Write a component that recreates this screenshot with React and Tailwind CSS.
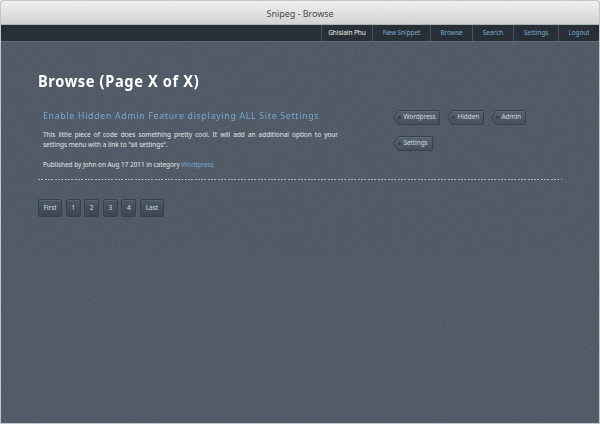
const NAV = [
  { label: 'New Snippet', box: 'w-[58px]', text: 'tracking-[-0.08px]' },
  { label: 'Browse', box: 'w-[42px]', text: 'tracking-[-0.05px]' },
  { label: 'Search', box: 'w-[41px]', text: 'tracking-[0px]' },
  { label: 'Settings', box: 'w-[45px]', text: 'tracking-[-0.05px]' },
  { label: 'Logout', box: 'w-[41px]', text: 'tracking-[-0.1px]' },
];

const PAGES = [
  { label: 'First', box: 'w-6' },
  { label: '1', box: 'w-[15px]' },
  { label: '2', box: 'w-[15px]' },
  { label: '3', box: 'w-[15px]' },
  { label: '4', box: 'w-[15px]' },
  { label: 'Last', box: 'w-6' },
];

function Grain({ id, opacity }) {
  return (
    <svg className={`pointer-events-none absolute inset-0 h-full w-full ${opacity}`} aria-hidden="true">
      <filter id={id}>
        <feTurbulence type="fractalNoise" baseFrequency="0.35" numOctaves="2" />
        <feColorMatrix type="saturate" values="0" />
      </filter>
      <rect width="100%" height="100%" filter={`url(#${id})`} />
    </svg>
  );
}

function Tag({ label, width }) {
  const id = `tag-${label}`;
  return (
    <div className="relative h-[15px]" style={{ width }}>
      <svg className="absolute inset-0 overflow-visible" width={width} height="16" aria-hidden="true">
        <defs>
          <linearGradient id={id} x1="0" y1="0" x2="0" y2="1">
            <stop offset="0" stopColor="#586371" />
            <stop offset="1" stopColor="#46505d" />
          </linearGradient>
        </defs>
        <path d={`M5 .5H${width - 1.5}Q${width - 0.5} .5 ${width - 0.5} 1.5V13.5Q${width - 0.5} 14.5 ${width - 1.5} 14.5H5L.5 7.5Z`} fill={`url(#${id})`} stroke="#37414c" />
        <path d={`M5.5 1.5H${width - 2}`} stroke="#657180" strokeOpacity=".6" />
        <circle cx="6.5" cy="7.5" r="1.3" fill="#3d4753" stroke="#343e49" strokeWidth=".7" />
      </svg>
      <span className="absolute left-[10.5px] top-0 whitespace-nowrap text-[6.5px] leading-[14.5px] tracking-[-0.08px] text-[#d2d6db]">{label}</span>
    </div>
  );
}

export default function App() {
  return (
    <div className="flex h-[424px] w-[600px] flex-col overflow-hidden rounded-t-[3px] border border-[#c3c5c7] bg-[#4f5965] font-['Noto_Sans','Open_Sans',sans-serif] text-[6.5px] text-[#e2e5e8]">
      <header className="relative h-6 shrink-0 border-b border-[#aeb5b6] bg-linear-to-b from-[#f2f2f2] to-[#d3d3d3] text-center">
        <Grain id="header-grain" opacity="opacity-[0.05]" />
        <h1 className="relative text-[9px] leading-[25px] tracking-[-0.05px] text-[#4b4b4b]">Snipeg - Browse</h1>
      </header>
      <nav className="flex h-[17px] shrink-0 justify-end border-b border-[#626b75] bg-[#292f36] leading-4">
        <div className="w-[51px] border-l border-[#48515c] text-center text-[#f0f1f2]">
          <span className="tracking-[-0.05px]">Ghislain Phu</span>
        </div>
        {NAV.map((n) => (
          <a key={n.label} className={`${n.box} whitespace-nowrap border-l border-[#48515c] text-center text-[#78a9d1]`}>
            <span className={n.text}>{n.label}</span>
          </a>
        ))}
      </nav>
      <main className="relative flex-1 pl-[37px] pr-[37px] pt-[27px]">
        <Grain id="page-grain" opacity="opacity-[0.06]" />
        <div className="relative">
          <h2 className="origin-left scale-x-[0.885] whitespace-nowrap text-[16.5px] font-bold leading-6 tracking-[0.72px] text-white">Browse (Page X of X)</h2>
          <article className="mt-[15px] flex h-[71px] pl-[5px]">
            <div className="w-[295px]">
              <h3 className="origin-left scale-x-[0.9] whitespace-nowrap text-[9.7px] leading-[16px] tracking-[0.8px] text-[#78a9d1]">Enable Hidden Admin Feature displaying ALL Site Settings</h3>
              <div className="mt-[6px] leading-[10px]">
                <p className="whitespace-nowrap text-justify tracking-[-0.03px] [text-align-last:justify]">This little piece of code does something pretty cool. It will add an additional option to your</p>
                <p className="whitespace-nowrap tracking-[-0.03px]">settings menu with a link to "all settings".</p>
              </div>
              <p className="mt-[10px] whitespace-nowrap leading-[10px] tracking-[-0.06px]">
                Published by John on Aug 17 2011 in category <a className="text-[#78a9d1]">Wordpress</a>
              </p>
            </div>
            <div className="ml-[55px] flex w-[150px] flex-wrap content-start gap-x-[7px] gap-y-[11px] pt-[2px]">
              <Tag label="Wordpress" width={47} />
              <Tag label="Hidden" width={37} />
              <Tag label="Admin" width={35} />
              <Tag label="Settings" width={40} />
            </div>
          </article>
          <div className="h-px bg-[repeating-linear-gradient(90deg,#b0b6bd_0_2px,transparent_2px_3.33px)]" />
          <div className="mt-[19px] flex gap-[3.6px]">
            {PAGES.map((p) => (
              <a key={p.label} className={`${p.box} h-[18px] rounded-[2px] border border-[#37404b] bg-linear-to-b from-[#4c5765] to-[#3d4753] text-center leading-4 text-[#d8dce1] shadow-[inset_0_1px_0_#586371]`}>
                {p.label}
              </a>
            ))}
          </div>
        </div>
      </main>
    </div>
  );
}
